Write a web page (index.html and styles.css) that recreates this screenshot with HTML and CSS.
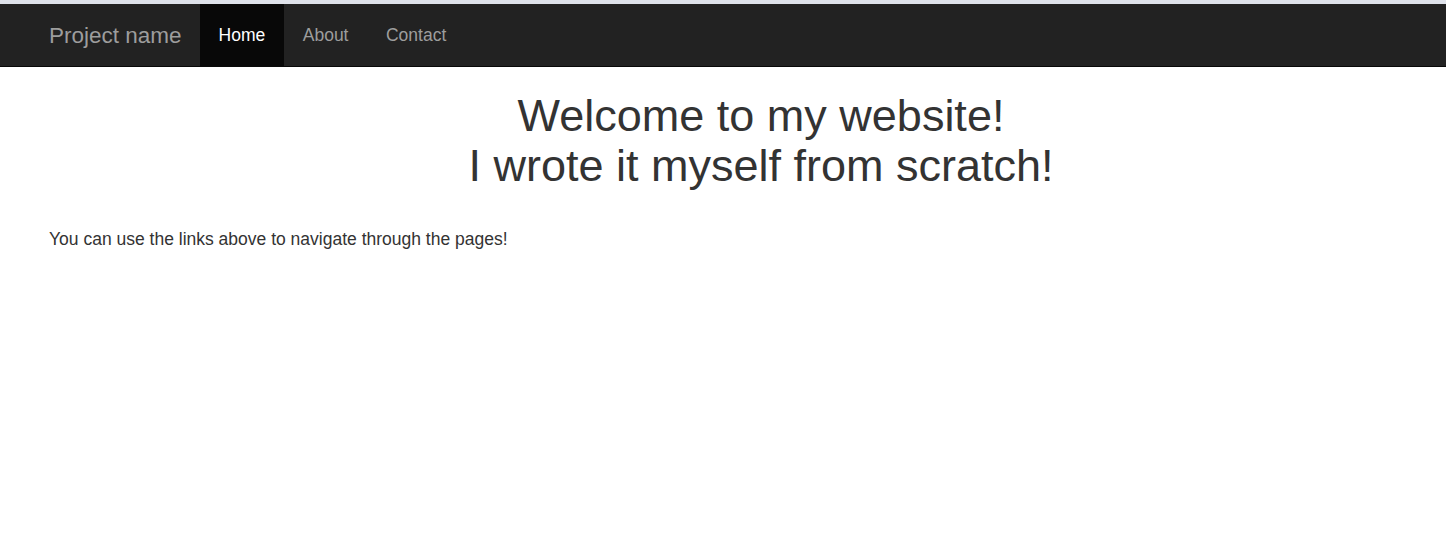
FILE: index.html
```html
<!DOCTYPE html>
<html>
<head>
<meta charset="utf-8">
<link rel="stylesheet" href="styles.css">
</head>
<body>
<div class="topstrip"></div>
<nav class="navbar">
  <a class="brand" href="#">Project name</a>
  <ul class="nav">
    <li class="active"><a href="#">Home</a></li>
    <li><a href="#">About</a></li>
    <li><a href="#">Contact</a></li>
  </ul>
</nav>
<main class="content">
  <h1 class="title">Welcome to my website!<br>I wrote it myself from scratch!</h1>
  <p class="lead">You can use the links above to navigate through the pages!</p>
</main>
</body>
</html>
```
FILE: styles.css
```css
html, body {
  margin: 0;
  padding: 0;
  background: #fff;
}
body {
  font-family: "Liberation Sans", Arial, sans-serif;
  font-size: 17.5px;
  line-height: 25px;
  color: #333;
}
.topstrip {
  height: 4px;
  background: #dfe2ea;
}
.navbar {
  display: flex;
  align-items: stretch;
  height: 62px;
  background: #222;
  border-bottom: 1px solid #080808;
  padding-left: 30px;
  box-sizing: content-box;
}
.brand {
  display: flex;
  align-items: center;
  padding: 0 18px 0 19px;
  font-size: 22.5px;
  color: #9d9d9d;
  text-decoration: none;
}
.nav {
  display: flex;
  margin: 0;
  padding: 0;
  list-style: none;
}
.nav li a {
  display: flex;
  align-items: center;
  height: 100%;
  padding: 0 18.5px 0 19px;
  color: #9d9d9d;
  text-decoration: none;
}
.nav li.active a {
  background: #080808;
  color: #fff;
}
.content {
  padding: 0 49px;
}
.title {
  margin: 24px 0 0;
  padding-left: 76px;
  font-size: 45px;
  font-weight: 500;
  line-height: 49.5px;
  text-align: center;
  color: #333;
}
.lead {
  margin: 37px 0 0;
}
```
